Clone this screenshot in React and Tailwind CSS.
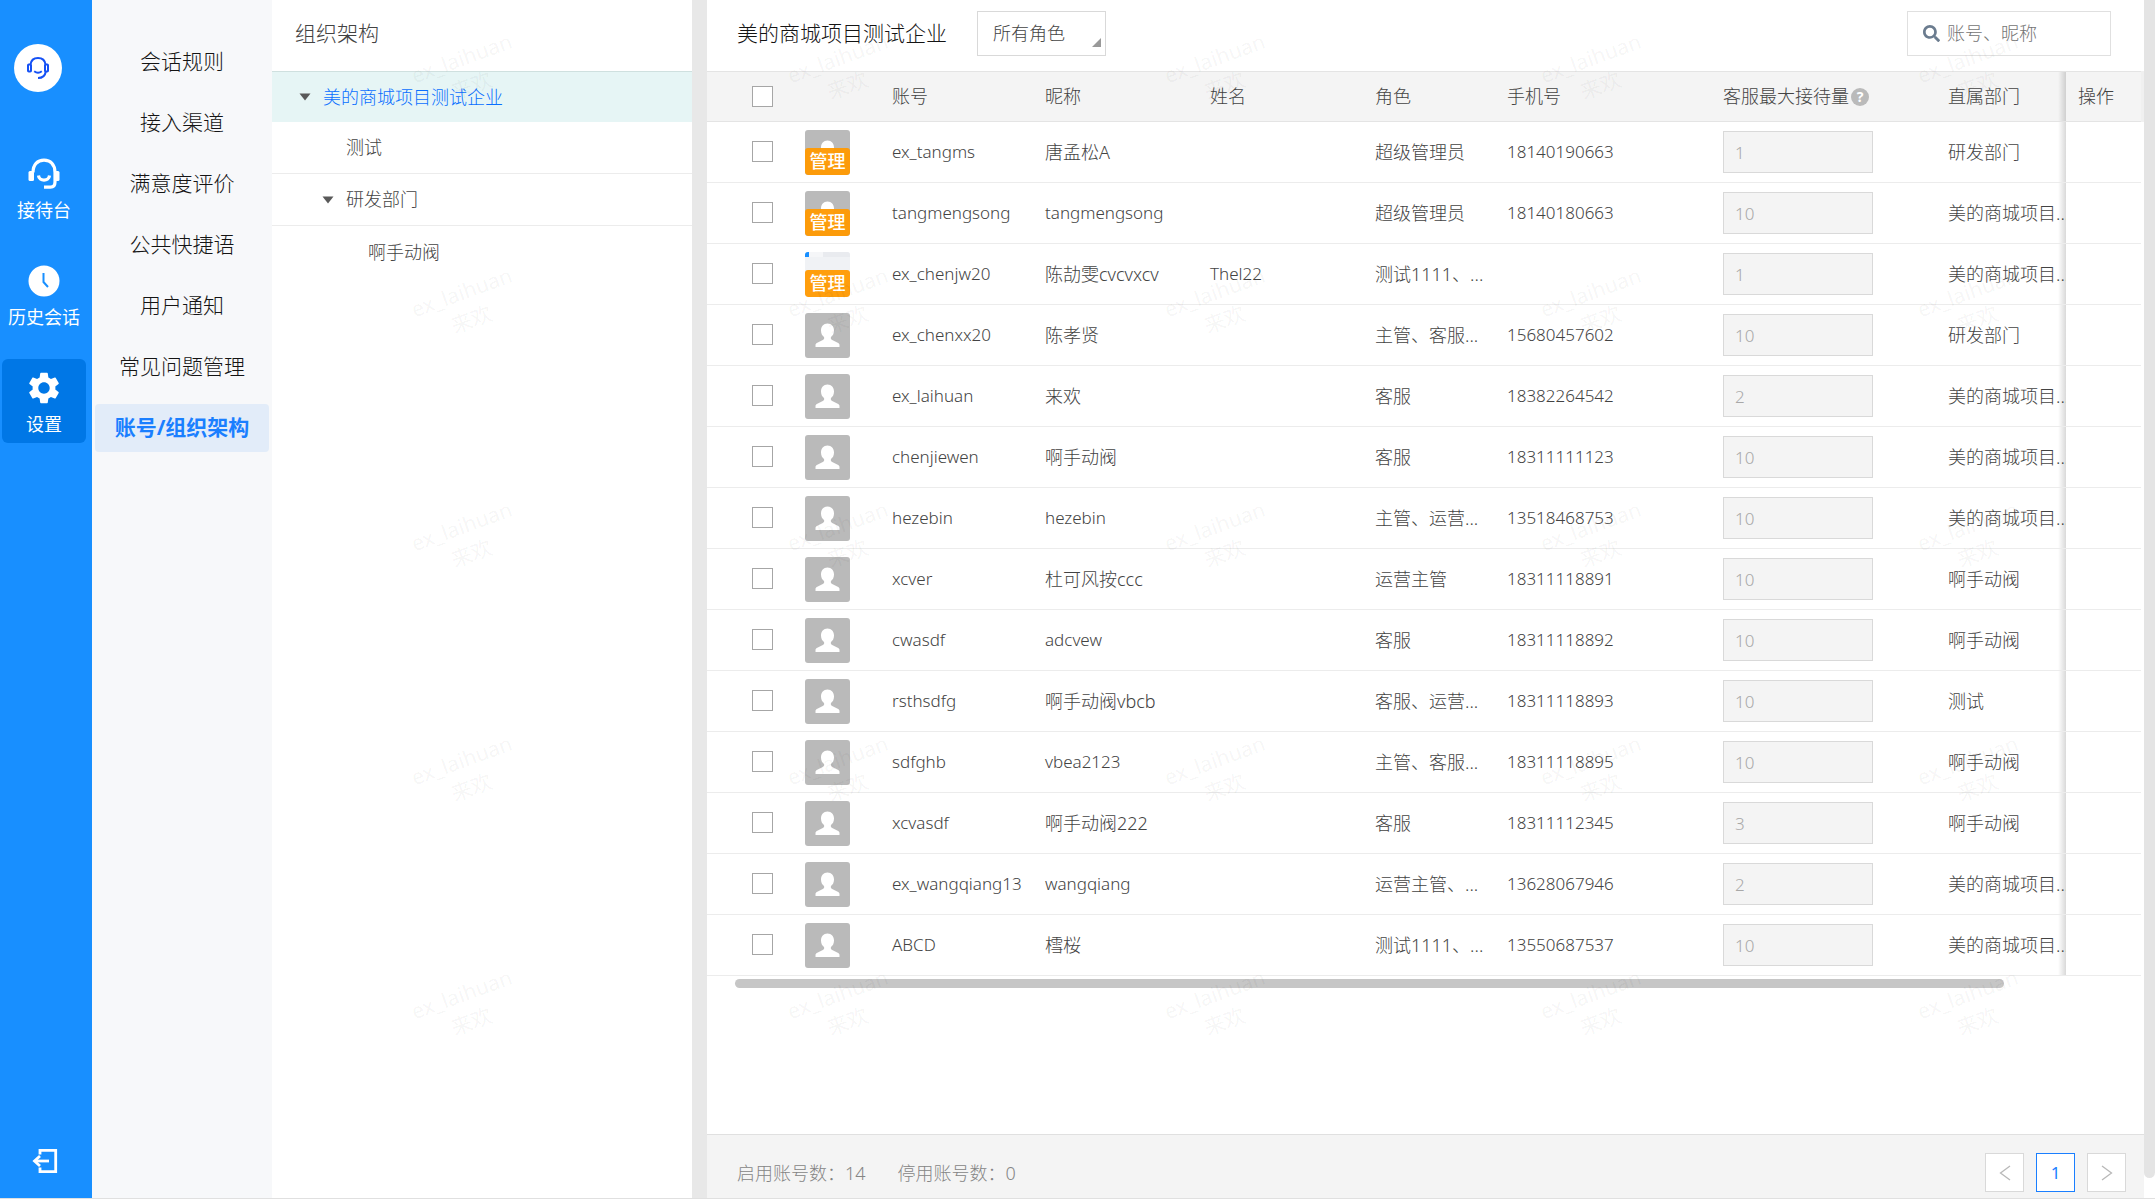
import { useState } from 'react';
import { MdSettings } from 'react-icons/md';
import { FaSearch } from 'react-icons/fa';

const menuItems = [
  '会话规则',
  '接入渠道',
  '满意度评价',
  '公共快捷语',
  '用户通知',
  '常见问题管理',
  '账号/组织架构',
];

const treeNodes = [
  { label: '美的商城项目测试企业', indent: 'pl-[27px]', open: true },
  { label: '测试', indent: 'pl-[50px]', open: false },
  { label: '研发部门', indent: 'pl-[50px]', open: true },
  { label: '啊手动阀', indent: 'pl-[72px]', open: false },
];

const ROOT_DEPT = '美的商城项目...';

const accounts = [
  { account: 'ex_tangms', nick: '唐孟松A', name: '', role: '超级管理员', phone: '18140190663', max: 1, dept: '研发部门', admin: true },
  { account: 'tangmengsong', nick: 'tangmengsong', name: '', role: '超级管理员', phone: '18140180663', max: 10, dept: ROOT_DEPT, admin: true },
  { account: 'ex_chenjw20', nick: '陈劼雯cvcvxcv', name: 'Thel22', role: '测试1111、...', phone: '', max: 1, dept: ROOT_DEPT, admin: true, photo: true },
  { account: 'ex_chenxx20', nick: '陈孝贤', name: '', role: '主管、客服...', phone: '15680457602', max: 10, dept: '研发部门' },
  { account: 'ex_laihuan', nick: '来欢', name: '', role: '客服', phone: '18382264542', max: 2, dept: ROOT_DEPT },
  { account: 'chenjiewen', nick: '啊手动阀', name: '', role: '客服', phone: '18311111123', max: 10, dept: ROOT_DEPT },
  { account: 'hezebin', nick: 'hezebin', name: '', role: '主管、运营...', phone: '13518468753', max: 10, dept: ROOT_DEPT },
  { account: 'xcver', nick: '杜可风按ccc', name: '', role: '运营主管', phone: '18311118891', max: 10, dept: '啊手动阀' },
  { account: 'cwasdf', nick: 'adcvew', name: '', role: '客服', phone: '18311118892', max: 10, dept: '啊手动阀' },
  { account: 'rsthsdfg', nick: '啊手动阀vbcb', name: '', role: '客服、运营...', phone: '18311118893', max: 10, dept: '测试' },
  { account: 'sdfghb', nick: 'vbea2123', name: '', role: '主管、客服...', phone: '18311118895', max: 10, dept: '啊手动阀' },
  { account: 'xcvasdf', nick: '啊手动阀222', name: '', role: '客服', phone: '18311112345', max: 3, dept: '啊手动阀' },
  { account: 'ex_wangqiang13', nick: 'wangqiang', name: '', role: '运营主管、...', phone: '13628067946', max: 2, dept: ROOT_DEPT },
  { account: 'ABCD', nick: '樰桜', name: '', role: '测试1111、...', phone: '13550687537', max: 10, dept: ROOT_DEPT },
];

// latin-only values are set one step smaller than Chinese ones
const isLatin = (text) => /^\w+$/.test(text);

const LogoIcon = () => (
  <svg width="24" height="24" viewBox="0 0 24 24" fill="none" stroke="#1551f5" strokeWidth="2">
    <path d="M4.500 8.500C5 4.500 8 2 12 2s7 2.500 7.500 6.500" />
    <rect x="2" y="8.500" width="3" height="7" rx="0.800" />
    <rect x="19" y="8.500" width="3" height="7" rx="0.800" />
    <path d="M19.800 15.500c-.6 4-3.600 6.500-7.800 6.500" />
    <path d="M8.200 15.300c2.200 1.600 5.400 1.600 7.600 0" />
  </svg>
);

const HeadsetIcon = () => (
  <svg width="32" height="32" viewBox="0 0 32 32" fill="none" stroke="#fff" strokeWidth="3.200">
    <path d="M5 14.500C5 6.500 9.500 2.100 16 2.100s11 4.400 11 12.400V24c0 3.500-1.500 5.200-4.500 5.200H16" />
    <rect x="0.500" y="13" width="5.500" height="10" rx="1.500" fill="#fff" stroke="none" />
    <rect x="26" y="13" width="5.500" height="10" rx="1.500" fill="#fff" stroke="none" />
    <path d="M10.500 17.500c.5 6.200 10.500 6.200 11 0" />
  </svg>
);

const ClockIcon = () => (
  <svg width="32" height="32" viewBox="0 0 32 32" fill="none">
    <circle cx="16" cy="16" r="15.500" fill="#fff" />
    <path d="M15.500 8v9l4.500 5" stroke="#188fff" strokeWidth="2" />
  </svg>
);

const LogoutIcon = () => (
  <svg width="26" height="26" viewBox="0 0 26 26" fill="none" stroke="#fff" strokeWidth="2.800">
    <path d="M8 6.500V2.300h15.700v21.400H8v-4.200" />
    <path d="M17 13H3" />
    <path d="M8 8l-5.500 5L8 18" />
  </svg>
);

const navItems = [
  { label: '接待台', icon: <HeadsetIcon /> },
  { label: '历史会话', icon: <ClockIcon /> },
  { label: '设置', icon: <MdSettings size={38} /> },
];

const Avatar = ({ admin, photo }) => (
  <div className={`relative w-[45px] h-[45px] rounded-[3px] overflow-hidden ${photo ? 'bg-[#f0f2f5]' : 'bg-[#bababa]'}`}>
    {photo ? (
      <div className="flex h-[5px] bg-[#e9ebef]">
        <div className="w-1 bg-[#188fff]" />
        <div className="w-[14px] bg-[#f5f6f8]" />
      </div>
    ) : (
      <svg width="45" height="45" viewBox="0 0 45 45" fill="#fff">
        <path d="M22.500 10.500c4 0 6.500 3 6.500 7 0 3-1.200 5.200-3 6.500-.5 1.500 0 2.300 1.200 2.900l6 3c1 .5 1.300 1.200 1.300 2.100v2h-24v-2c0-.9.3-1.600 1.300-2.100l6-3c1.200-.6 1.700-1.400 1.200-2.900-1.800-1.300-3-3.500-3-6.500 0-4 2.500-7 6.500-7z" />
      </svg>
    )}
    {admin && (
      <span className="absolute inset-x-0 bottom-0 h-[27px] rounded-[3px] bg-[#ff9900]/95 text-white text-[18px] leading-[27px] font-medium text-center">
        管理
      </span>
    )}
  </div>
);

const Checkbox = ({ label }) => (
  <input
    type="checkbox"
    aria-label={label}
    className="block appearance-none w-[21px] h-[21px] border border-[#a6a6a6] bg-white checked:bg-[#188fff]"
  />
);

const Watermark = () => (
  <div className="absolute inset-0 overflow-hidden pointer-events-none grid grid-cols-5 auto-rows-[234px] z-10" aria-hidden="true">
    {Array.from({ length: 25 }, (_, i) => (
      <div key={i} className="flex justify-center pt-[43px] pl-3">
        <div className="h-[58px] -rotate-20 text-[21px] leading-[29px] text-center text-black/[0.05] font-normal">
          ex_laihuan
          <br />
          来欢
        </div>
      </div>
    ))}
  </div>
);

const App = () => {
  const [activeMenu, setActiveMenu] = useState('账号/组织架构');
  const [activeNav, setActiveNav] = useState('设置');
  const [activeNode, setActiveNode] = useState('美的商城项目测试企业');

  return (
    <div className="min-h-screen flex border-b border-[#e0e0e0] bg-white text-[18px] text-[#434343] font-light font-['Noto_Sans','Noto_Sans_CJK_SC',sans-serif]">

      {/* primary nav */}
      <nav className="w-[92px] shrink-0 bg-[#188fff] text-white flex flex-col pt-11 pb-6">
        <div className="ml-[14px] w-12 h-12 rounded-full bg-white flex items-center justify-center">
          <LogoIcon />
        </div>
        <div className="mt-[53px] ml-0.5 w-[84px] flex flex-col gap-[23px] font-normal">
          {navItems.map((item) => (
            <button
              key={item.label}
              onClick={() => setActiveNav(item.label)}
              className={`h-[84px] rounded-md flex flex-col items-center pt-[13px] whitespace-nowrap ${activeNav === item.label ? 'bg-[#0077e6]' : ''}`}
            >
              <span className="h-8 flex items-center">{item.icon}</span>
              <span className="mt-2 leading-6">{item.label}</span>
            </button>
          ))}
        </div>
        <button className="mt-auto ml-8 w-[26px]" aria-label="退出">
          <LogoutIcon />
        </button>
      </nav>

      {/* settings menu */}
      <nav className="w-[180px] shrink-0 bg-[#f7f8fa] px-[3px] pt-[38px] flex flex-col gap-[13px]">
        {menuItems.map((label) => (
          <button
            key={label}
            onClick={() => setActiveMenu(label)}
            className={`h-12 rounded text-[21px] whitespace-nowrap ${activeMenu === label
              ? 'bg-[#e2ecf9] text-[#1a7fff] font-bold'
              : 'text-[#141414]'}`}
          >
            {label}
          </button>
        ))}
      </nav>

      <div className="relative flex-1 min-w-0 flex">
        <Watermark />

        {/* organisation tree */}
        <section className="w-[420px] shrink-0">
          <h2 className="h-[71px] pl-[23px] pb-[3px] flex items-center text-[21px]">组织架构</h2>
          <ul>
            {treeNodes.map((node, i) => (
              <li key={node.label}>
                <button
                  onClick={() => setActiveNode(node.label)}
                  className={`w-full flex items-center gap-3 ${node.indent} ${i === 0 ? 'h-[51px] border-t border-[#cfe0df]' : 'h-[52px]'} ${i === 1 || i === 2 ? 'border-b border-[#ececec]' : ''} ${activeNode === node.label ? 'bg-[#e6f5f5] text-[#0a6fff]' : ''}`}
                >
                  <svg width="12" height="8" viewBox="0 0 12 8" fill={node.open ? '#595959' : 'none'}>
                    <path d="M0.500 0.500h11L6 7.500z" />
                  </svg>
                  <span>{node.label}</span>
                </button>
              </li>
            ))}
          </ul>
        </section>

        <div className="w-[15px] shrink-0 bg-[#e8e8e8]" />

        {/* accounts */}
        <main className="flex-1 min-w-0 flex flex-col">
          <header className="h-[71px] pl-[30px] pr-[33px] pb-1 flex items-center">
            <h1 className="text-[21px] text-[#141414]">美的商城项目测试企业</h1>
            <div className="relative ml-[30px]">
              <select
                aria-label="角色"
                className="block appearance-none w-[129px] h-[45px] border border-[#d9d9d9] bg-white pl-[15px]"
              >
                <option>所有角色</option>
              </select>
              <svg className="absolute right-[5px] bottom-[9px] pointer-events-none" width="9" height="9" viewBox="0 0 9 9">
                <path d="M9 0v9H0z" fill="#999" />
              </svg>
            </div>
            <label className="ml-auto w-[204px] h-[45px] border border-[#e0e0e0] flex items-center gap-[7px] pl-[15px]">
              <FaSearch size={17} color="#6b7c8f" />
              <input
                type="text"
                aria-label="搜索"
                placeholder="账号、昵称"
                className="flex-1 min-w-0 outline-none placeholder:text-[#757575]"
              />
            </label>
          </header>

          <div className="bg-[linear-gradient(#f0f0f0,#f0f0f0)] bg-[length:100%_51px] bg-no-repeat pr-[3px]">
            <table className="w-full table-fixed border-separate border-spacing-0 bg-white whitespace-nowrap">
              <colgroup>
                <col className="w-[86px]" />
                <col className="w-[87px]" />
                <col className="w-[153px]" />
                <col className="w-[165px]" />
                <col className="w-[165px]" />
                <col className="w-[132px]" />
                <col className="w-[216px]" />
                <col className="w-[225px]" />
                <col className="w-[130px]" />
                <col className="w-[75px]" />
              </colgroup>
              <thead>
                <tr className="text-left [&>th]:h-[51px] [&>th]:border-y [&>th]:border-[#e4e4e4] [&>th]:bg-[#f4f4f4] [&>th]:font-light [&>th]:py-0 [&>th]:px-3">
                  <th><div className="pl-[33px]"><Checkbox label="全选" /></div></th>
                  <th aria-label="头像" />
                  <th>账号</th>
                  <th>昵称</th>
                  <th>姓名</th>
                  <th>角色</th>
                  <th>手机号</th>
                  <th>
                    <div className="flex items-center gap-0.5">
                      客服最大接待量
                      <span className="w-[18px] h-[18px] rounded-full bg-[#bababa] text-white text-[14px] leading-[18px] font-bold text-center">?</span>
                    </div>
                  </th>
                  <th>直属部门</th>
                  <th className="relative before:absolute before:inset-y-0 before:-left-2 before:w-2 before:bg-linear-to-l before:from-black/15 before:to-transparent">操作</th>
                </tr>
              </thead>
              <tbody>
                {accounts.map((row) => (
                  <tr key={row.account} className="[&>td]:h-[61px] [&>td]:border-b [&>td]:border-[#ececec] [&>td]:py-0 [&>td]:px-3">
                    <td><div className="pl-[33px] pb-0.5"><Checkbox label={row.account} /></div></td>
                    <td><Avatar admin={row.admin} photo={row.photo} /></td>
                    <td className="text-[17px]">{row.account}</td>
                    <td className={isLatin(row.nick) ? 'text-[17px]' : ''}>{row.nick}</td>
                    <td className="text-[17px]">{row.name}</td>
                    <td>{row.role}</td>
                    <td className="text-[17px]">{row.phone}</td>
                    <td>
                      <input
                        type="text"
                        disabled
                        aria-label="客服最大接待量"
                        defaultValue={row.max}
                        className="block w-[150px] h-[42px] border border-[#d9d9d9] bg-[#f4f4f4] px-[11px] text-[17px] text-[#a8a8a8]"
                      />
                    </td>
                    <td>{row.dept}</td>
                    <td className="relative bg-white before:absolute before:inset-y-0 before:-left-2 before:w-2 before:bg-linear-to-l before:from-black/15 before:to-transparent" />
                  </tr>
                ))}
              </tbody>
            </table>
          </div>
          <div className="mt-[3px] ml-7 mr-[140px] h-[9px] rounded-full bg-[#c6c6c6]" />

          <footer className="mt-auto h-16 border-t border-[#e0e0e0] bg-[#f4f4f4] pl-[30px] pr-[18px] flex text-[#858585]">
            <p className="pt-6 leading-7">启用账号数：14</p>
            <p className="pt-6 leading-7 ml-8">停用账号数：0</p>
            <div className="ml-auto pt-[18px] flex gap-3">
              <button aria-label="上一页" className="w-[39px] h-[39px] border border-[#d9d9d9] bg-white flex items-center justify-center">
                <svg width="12" height="16" viewBox="0 0 12 16" fill="none" stroke="#b8b8b8" strokeWidth="1.300"><path d="M11 1L1.500 8l9.500 7" /></svg>
              </button>
              <button className="w-[39px] h-[39px] border border-[#1a7fff] bg-white text-[17px] text-[#1a7fff] font-normal">1</button>
              <button aria-label="下一页" className="w-[39px] h-[39px] border border-[#d9d9d9] bg-white flex items-center justify-center">
                <svg width="12" height="16" viewBox="0 0 12 16" fill="none" stroke="#b8b8b8" strokeWidth="1.300"><path d="M1 1l9.500 7L1 15" /></svg>
              </button>
            </div>
          </footer>
        </main>

        {/* page scroll bar */}
        <div className="w-[11px] shrink-0 pb-5 flex">
          <div className="w-full rounded-b-full bg-[#e4e4e4]" />
        </div>
      </div>
    </div>
  );
};

export default App;
